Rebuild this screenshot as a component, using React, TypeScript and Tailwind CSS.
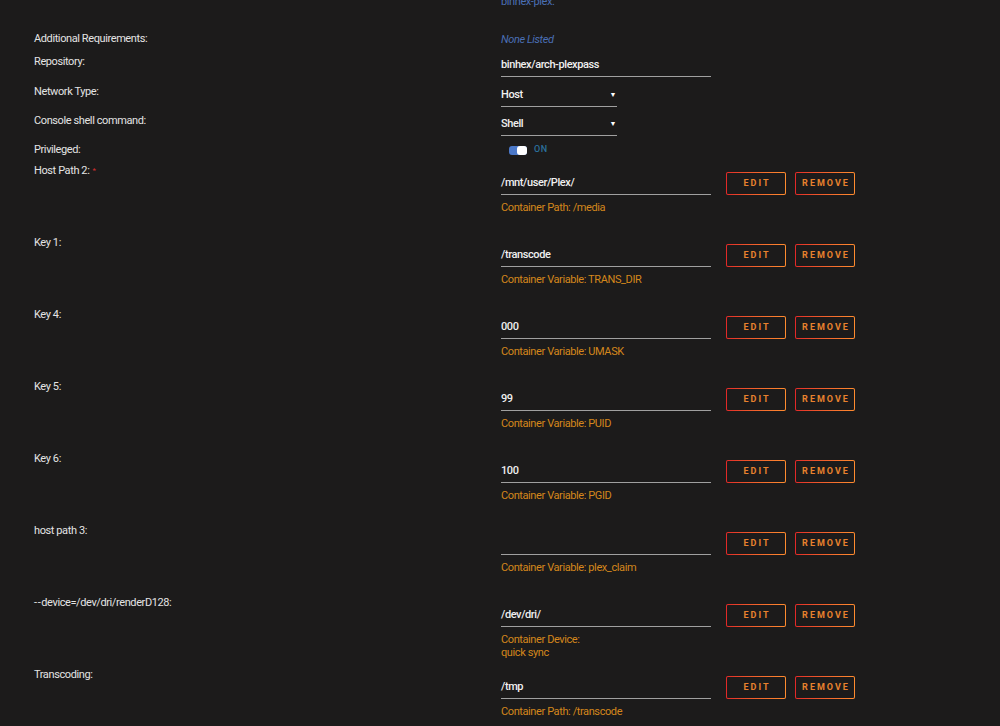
import React from 'react';

// Docker template edit view (dark theme)

interface PathRow {
  label: string;
  value: string;
  desc: string[];
  required?: boolean;
}

const pathRows: PathRow[] = [
  { label: 'Host Path 2:', value: '/mnt/user/Plex/', desc: ['Container Path: /media'], required: true },
  { label: 'Key 1:', value: '/transcode', desc: ['Container Variable: TRANS_DIR'] },
  { label: 'Key 4:', value: '000', desc: ['Container Variable: UMASK'] },
  { label: 'Key 5:', value: '99', desc: ['Container Variable: PUID'] },
  { label: 'Key 6:', value: '100', desc: ['Container Variable: PGID'] },
  { label: 'host path 3:', value: '', desc: ['Container Variable: plex_claim'] },
  { label: '--device=/dev/dri/renderD128:', value: '/dev/dri/', desc: ['Container Device:', 'quick sync'] },
  { label: 'Transcoding:', value: '/tmp', desc: ['Container Path: /transcode'] },
];

function GradientButton({ children }: { children: React.ReactNode }) {
  return (
    <button className="w-[60px] h-[23px] p-px rounded-[2px] bg-gradient-to-r from-[#e22828] to-[#ff8c2f]">
      <span className="flex items-center justify-center w-full h-full rounded-[1px] bg-[#1c1b1b] text-[9px] font-bold tracking-[2px] pl-[2px] text-[#e8822e]">
        {children}
      </span>
    </button>
  );
}

function TextInput({ value }: { value: string }) {
  return (
    <div className="w-[210px] h-[23px] flex items-center border-b border-[#a0a0a0] text-[11px] font-medium text-[#f0f0f0]">
      {value}
    </div>
  );
}

function SelectBox({ value }: { value: string }) {
  return (
    <div className="w-[116px] h-[23px] flex items-center justify-between border-b border-[#a0a0a0] text-[11px] font-medium text-[#f0f0f0]">
      <span>{value}</span>
      <span className="text-[7px] text-white pr-[1px]">▼</span>
    </div>
  );
}

function Label({ children, required }: { children: React.ReactNode; required?: boolean }) {
  return (
    <div className="w-[467px] shrink-0 leading-[16px] text-[11px] text-[#e4e4e4]">
      {children}
      {required && <span className="text-[#d32f2f] ml-[3px] text-[8px] align-top">*</span>}
    </div>
  );
}

export default function App() {
  return (
    <div
      className="w-[1000px] h-[726px] overflow-hidden bg-[#1c1b1b] pl-[34px] tracking-[-0.4px]"
      style={{ fontFamily: 'Roboto, "Noto Sans", sans-serif' }}
    >
      <div className="flex -mt-[6px] h-[37px]">
        <Label>{''}</Label>
        <div className="leading-[16px] text-[11px] text-[#4a6fb5]">binhex-plex.</div>
      </div>

      <div className="flex h-[23px]">
        <Label>Additional Requirements:</Label>
        <div className="leading-[16px] text-[11px] italic text-[#4a6fb5] pt-[1px]">None Listed</div>
      </div>

      <div className="flex h-[30px]">
        <Label>Repository:</Label>
        <TextInput value="binhex/arch-plexpass" />
      </div>

      <div className="flex h-[29px]">
        <Label>Network Type:</Label>
        <SelectBox value="Host" />
      </div>

      <div className="flex h-[29px]">
        <Label>Console shell command:</Label>
        <SelectBox value="Shell" />
      </div>

      <div className="flex h-[21px]">
        <Label>Privileged:</Label>
        <div className="flex items-center h-[16px] pl-[8px] gap-[7px]">
          <div className="w-[18px] h-[9px] rounded-[3px] bg-[#4b78c8] flex justify-end">
            <div className="w-[10px] h-[9px] rounded-[3px] bg-white" />
          </div>
          <span className="text-[9px] font-medium text-[#2b6f9c] tracking-[0.5px]">ON</span>
        </div>
      </div>

      {pathRows.map((row) => (
        <div key={row.label} className="flex h-[72px]">
          <Label required={row.required}>
            {row.label.startsWith('--') ? (
              <>
                <span className="tracking-[0.6px]">--</span>
                {row.label.slice(2)}
              </>
            ) : (
              row.label
            )}
          </Label>
          <div className="pt-[9px]">
            <div className="flex items-center">
              <TextInput value={row.value} />
              <div className="flex gap-[9px] ml-[15px]">
                <GradientButton>EDIT</GradientButton>
                <GradientButton>REMOVE</GradientButton>
              </div>
            </div>
            <div className="mt-[6px] text-[11px] leading-[13px] text-[#d4871c]">
              {row.desc.map((d) => (
                <div key={d}>{d}</div>
              ))}
            </div>
          </div>
        </div>
      ))}
    </div>
  );
}
